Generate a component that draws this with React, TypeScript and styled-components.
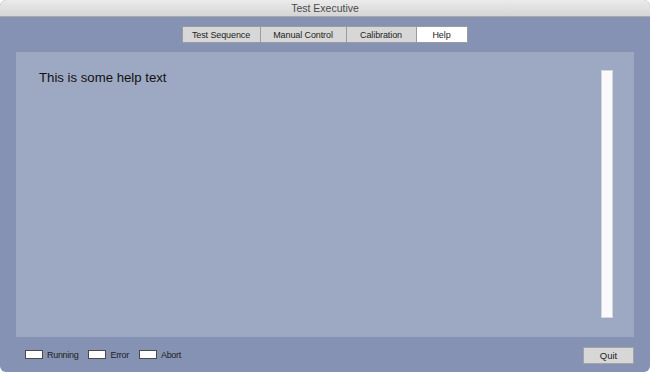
import React from "react";
import styled, { createGlobalStyle } from "styled-components";

const Global = createGlobalStyle`
  html, body { margin: 0; padding: 0; background: #ffffff; }
  body { font-family: "Liberation Sans", Arial, sans-serif; }
`;

const Window = styled.div`
  width: 650px;
  height: 372px;
  display: flex;
  flex-direction: column;
  background: #8692b3;
  border-radius: 6px;
  overflow: hidden;
`;

const TitleBar = styled.div`
  height: 16px;
  flex: none;
  display: flex;
  align-items: center;
  justify-content: center;
  background: linear-gradient(#ebebeb, #d5d5d5);
  border-bottom: 1px solid #a9a9a9;
  font-size: 10.5px;
  color: #4a4a4a;
`;

const TabRow = styled.div`
  display: flex;
  justify-content: center;
  padding-top: 9px;
  height: 17px;
  margin-bottom: 9px;
`;

const Tab = styled.div<{ $active?: boolean; $w: number }>`
  width: ${(p) => p.$w}px;
  height: 17px;
  box-sizing: border-box;
  display: flex;
  align-items: center;
  justify-content: center;
  background: ${(p) => (p.$active ? "#ffffff" : "#d7d7d7")};
  border: 1px solid #9c9c9c;
  margin-left: -1px;
  font-size: 9px;
  letter-spacing: -0.1px;
  color: #1e1e1e;
`;

const Panel = styled.div`
  margin: 0 16px;
  height: 285px;
  background: #9da8c3;
  display: flex;
  box-sizing: border-box;
  padding: 18px 21px 19px 23px;
`;

const HelpText = styled.div`
  flex: 1;
  font-size: 13.2px;
  color: #111;
  line-height: 16px;
`;

const Scroll = styled.div`
  width: 12px;
  box-sizing: border-box;
  background: #fafafb;
  border: 1px solid #d4d7e0;
`;

const Bottom = styled.div`
  flex: 1;
  display: flex;
  align-items: center;
  padding: 0 16px 0 25px;
`;

const Indicator = styled.div`
  display: flex;
  align-items: center;
  gap: 4px;
  margin-right: 10px;
  font-size: 9px;
  letter-spacing: -0.3px;
  color: #1e1e1e;
`;

const Lamp = styled.div`
  width: 18px;
  height: 9px;
  box-sizing: border-box;
  background: #ffffff;
  border: 1px solid #4a4a4a;
`;

const Spacer = styled.div`
  flex: 1;
`;

const QuitButton = styled.div`
  width: 51px;
  height: 17px;
  box-sizing: border-box;
  display: flex;
  align-items: center;
  justify-content: center;
  background: #d7d7d7;
  border: 1px solid #a3a3a3;
  font-size: 9.5px;
  color: #1e1e1e;
  margin-top: 1px;
`;

export default function App() {
  return (
    <>
      <Global />
      <Window>
        <TitleBar>Test Executive</TitleBar>
        <TabRow>
          <Tab $w={79}>Test Sequence</Tab>
          <Tab $w={87}>Manual Control</Tab>
          <Tab $w={71}>Calibration</Tab>
          <Tab $w={52} $active>
            Help
          </Tab>
        </TabRow>
        <Panel>
          <HelpText>This is some help text</HelpText>
          <Scroll />
        </Panel>
        <Bottom>
          <Indicator>
            <Lamp />
            Running
          </Indicator>
          <Indicator>
            <Lamp />
            Error
          </Indicator>
          <Indicator>
            <Lamp />
            Abort
          </Indicator>
          <Spacer />
          <QuitButton>Quit</QuitButton>
        </Bottom>
      </Window>
    </>
  );
}
